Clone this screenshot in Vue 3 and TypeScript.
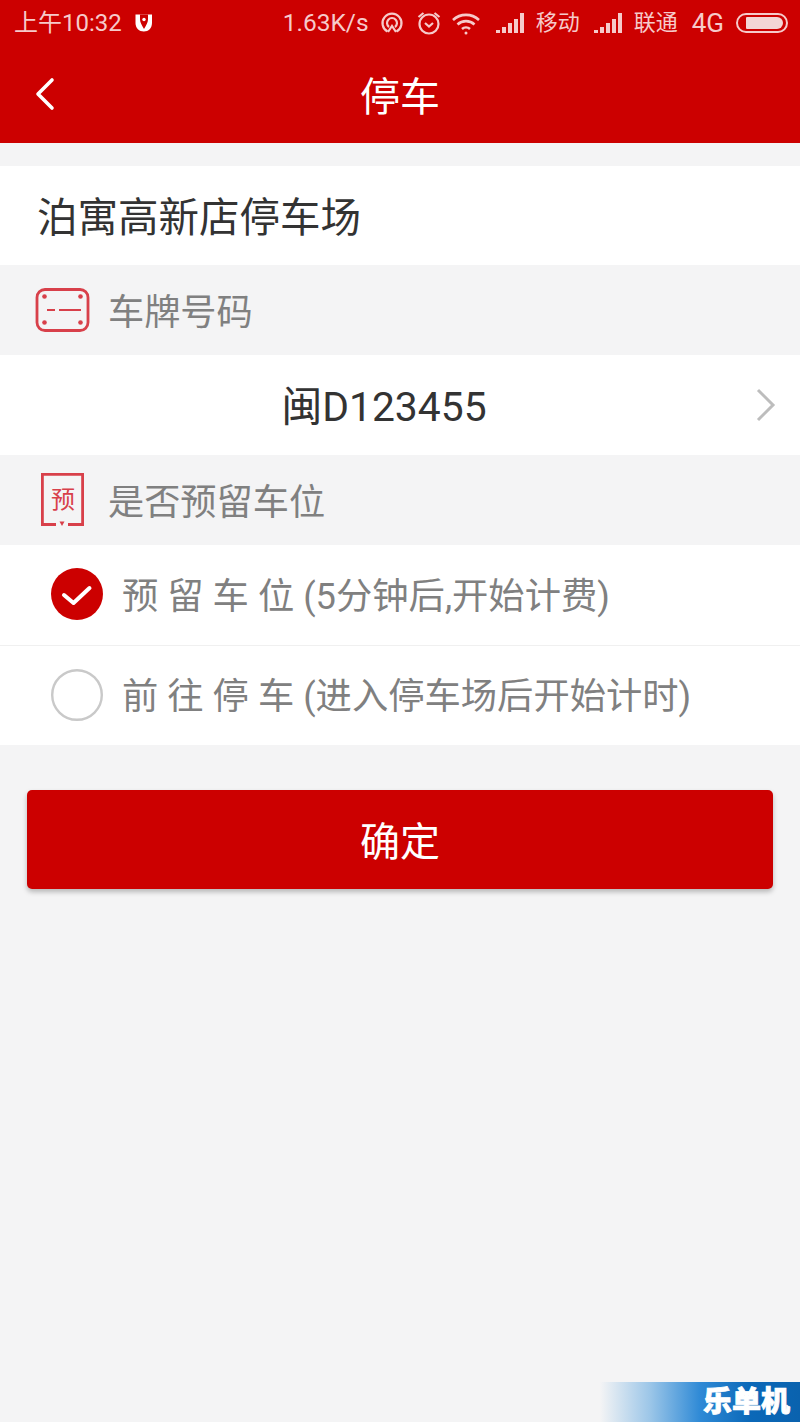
<template>
  <main class="page">
    <header class="top">
      <div class="status">
        <span class="clock">上午10:32</span>
        <svg class="shield" width="20" height="20" viewBox="0 0 20 20">
          <path d="M1.500 1.500H18V10c0 5-3.500 8.500-8.200 8.500S1.500 15 1.500 10z" fill="#fff" />
          <path d="M6 1.500h8v5c0 3-2 6-4 9.500-2-3.500-4-6.500-4-9.500z" fill="#cc0000" />
          <circle cx="10" cy="6.500" r="1.700" fill="#fff" />
        </svg>
        <span class="spacer"></span>
        <span class="speed">1.63K/s</span>
        <svg class="ic-hotspot" width="24" height="24" viewBox="0 0 24 24" fill="none" stroke="#f6caca" stroke-width="2.200">
          <path d="M7.500 20.500a9.500 9.500 0 1 1 9 0" />
          <path d="M9 16a5 5 0 1 1 6 0" />
          <path d="M8 21l4-6 4 6" />
        </svg>
        <svg class="ic-alarm" width="26" height="26" viewBox="0 0 26 26" fill="none" stroke="#f6caca" stroke-width="2.200">
          <circle cx="13" cy="14" r="9.500" />
          <path d="M9 13l4 3.500 4-3.500" />
          <path d="M2.500 7l5-4M23.500 7l-5-4" />
        </svg>
        <svg class="ic-wifi" width="30" height="24" viewBox="0 0 30 24" fill="none" stroke="#f6caca" stroke-width="2.600">
          <path d="M2 9a19 19 0 0 1 26 0" />
          <path d="M6.500 13.500a12.500 12.500 0 0 1 17 0" />
          <path d="M11 18a6 6 0 0 1 8 0" />
          <circle cx="15" cy="22" r="1.500" fill="#f6caca" stroke="none" />
        </svg>
        <div class="signal">
          <i v-for="h in bars" :key="h" :style="{ height: h + 'px' }"></i>
        </div>
        <span class="carrier">移动</span>
        <div class="signal">
          <i v-for="h in bars" :key="h" :style="{ height: h + 'px' }"></i>
        </div>
        <span class="carrier">联通</span>
        <span class="net">4G</span>
        <div class="battery"><div class="level"></div></div>
      </div>
      <div class="nav">
        <svg class="back" width="22" height="34" viewBox="0 0 22 34" fill="none" stroke="#fff" stroke-width="3.600" stroke-linecap="round" stroke-linejoin="round">
          <path d="M18 3L4 17l14 14" />
        </svg>
        <h1 class="nav-title">停车</h1>
      </div>
    </header>

    <section class="lot">泊寓高新店停车场</section>

    <div class="section">
      <svg class="sec-icon" width="56" height="46" viewBox="0 0 56 46" fill="none" stroke="#d8404a">
        <rect x="3" y="2.500" width="51" height="41" rx="8" stroke-width="2.800" />
        <path d="M13 23h8M25 23h22" stroke-width="2.200" />
        <g fill="#d8404a" stroke="none">
          <circle cx="10.500" cy="9.500" r="2.300" />
          <circle cx="46.500" cy="9.500" r="2.300" />
          <circle cx="10.500" cy="35.500" r="2.300" />
          <circle cx="46.500" cy="35.500" r="2.300" />
        </g>
      </svg>
      <span class="sec-label">车牌号码</span>
    </div>

    <div class="plate">
      <span class="plate-no">闽D123455</span>
      <svg class="chevron" width="22" height="34" viewBox="0 0 22 34" fill="none" stroke="#bdbdbd" stroke-width="3">
        <path d="M3 2l15 15L3 32" />
      </svg>
    </div>

    <div class="section">
      <svg class="sec-icon" width="56" height="56" viewBox="0 0 56 56" fill="none" stroke="#d8404a" stroke-width="2.800">
        <path d="M22 52.500H8.400V2.400h40.200v50.100H34" />
        <path d="M25.500 49.500h5L28 54z" fill="#d8404a" stroke="none" />
        <text x="29" y="36" text-anchor="middle" class="yu">预</text>
      </svg>
      <span class="sec-label">是否预留车位</span>
    </div>

    <div class="options">
      <div v-for="opt in options" :key="opt.label" class="option">
        <svg v-if="opt.checked" width="52" height="52" viewBox="0 0 52 52">
          <circle cx="26" cy="26" r="26" fill="#cc0000" />
          <path d="M13 27l9.500 8 16-15" fill="none" stroke="#fff" stroke-width="4" stroke-linecap="round" stroke-linejoin="round" />
        </svg>
        <svg v-else width="52" height="52" viewBox="0 0 52 52">
          <circle cx="26" cy="26" r="24.800" fill="#fff" stroke="#c9c9c9" stroke-width="2.400" />
        </svg>
        <span class="opt-text"><span class="opt-label">{{ opt.label }}</span> {{ opt.note }}</span>
      </div>
    </div>

    <button class="confirm" type="button">确定</button>

    <div class="watermark"><span>乐单机</span></div>
  </main>
</template>

<script setup lang="ts">
interface ParkOption {
  label: string;
  note: string;
  checked: boolean;
}

const bars = [3, 6, 10, 14, 20];

const options: ParkOption[] = [
  { label: "预留车位", note: "(5分钟后,开始计费)", checked: true },
  { label: "前往停车", note: "(进入停车场后开始计时)", checked: false },
];
</script>

<style>
html,
body {
  margin: 0;
  background: #f4f4f5;
}
</style>

<style scoped>
.page {
  position: relative;
  width: 800px;
  height: 1422px;
  overflow: hidden;
  background: #f4f4f5;
  font-family: Roboto, "Noto Sans CJK SC", sans-serif;
}

.top {
  height: 143px;
  background: #cc0000;
  margin-bottom: 23px;
}

.status {
  height: 46px;
  display: flex;
  align-items: center;
  padding: 0 12px 0 14px;
  color: #f6caca;
  font-size: 24.500px;
  line-height: 1;
  box-sizing: border-box;
}

.clock {
  width: 120px;
  font-size: 24px;
}

.spacer {
  flex: 1;
}

.speed {
  margin-right: 11px;
}

.ic-hotspot {
  margin-right: 12px;
}

.ic-alarm {
  margin-right: 9px;
}

.ic-wifi {
  margin-right: 15px;
}

.signal {
  display: flex;
  align-items: flex-end;
  gap: 2px;
  width: 28px;
  height: 20px;
  margin-right: 12px;
}

.signal i {
  display: block;
  width: 4px;
  background: #f6caca;
}

.carrier {
  font-size: 22px;
  margin-right: 14px;
}

.net {
  font-size: 26px;
  margin-right: 12px;
}

.battery {
  width: 52px;
  height: 20px;
  border: 2px solid #f6caca;
  border-radius: 11px;
  box-sizing: border-box;
  padding: 2px 3px 2px 8px;
}

.level {
  height: 100%;
  background: #f3d6d6;
  border-radius: 1px 6px 6px 1px;
}

.nav {
  position: relative;
  height: 97px;
  display: flex;
  align-items: center;
  justify-content: center;
}

.back {
  position: absolute;
  left: 34px;
  top: 31px;
}

.nav-title {
  margin: 0;
  padding-top: 6px;
  font-size: 40px;
  font-weight: 400;
  line-height: 1;
  color: #fff;
}

.lot {
  height: 99px;
  background: #fff;
  display: flex;
  align-items: center;
  padding: 6px 0 0 37px;
  box-sizing: border-box;
  font-size: 40.500px;
  line-height: 1;
  color: #333;
}

.section {
  height: 90px;
  display: flex;
  align-items: center;
  padding-left: 34px;
  font-size: 36.200px;
  line-height: 1;
  color: #808080;
}

.sec-label {
  padding-top: 6px;
}

.sec-icon {
  margin-right: 18px;
  flex: none;
}

.yu {
  font-size: 24px;
  fill: #d8404a;
  stroke: none;
}

.plate {
  position: relative;
  height: 100px;
  background: #fff;
  display: flex;
  align-items: center;
  justify-content: center;
  padding-right: 32px;
  box-sizing: border-box;
  font-size: 40.800px;
  line-height: 1;
  color: #333;
}

.plate-no {
  padding-top: 5px;
}

.chevron {
  position: absolute;
  right: 23px;
  top: 33px;
}

.option {
  height: 100px;
  background: #fff;
  display: flex;
  align-items: center;
  padding: 0 0 2px 51px;
  gap: 19px;
  box-sizing: border-box;
}

.option + .option {
  border-top: 1px solid #f0f0f0;
}

.opt-text {
  padding-top: 6px;
  font-size: 36.300px;
  line-height: 1;
  color: #808080;
}

.opt-label {
  letter-spacing: 9px;
  margin-right: -9px;
}

.confirm {
  display: block;
  width: 746px;
  height: 99px;
  margin: 45px 0 0 27px;
  padding: 6px 0 0;
  border: 0;
  border-radius: 5px;
  background: #cc0000;
  box-shadow: 0 3px 5px rgba(0, 0, 0, 0.25);
  color: #fff;
  font-family: inherit;
  font-size: 40px;
  line-height: 1;
}

.watermark {
  position: absolute;
  right: 0;
  bottom: 0;
  width: 200px;
  height: 40px;
  background: linear-gradient(90deg, #f4f4f5 0%, #9cc6e8 25%, #2f8ad6 50%, #0b68b8 75%, #0a62ae 100%);
  display: flex;
  align-items: center;
  justify-content: flex-end;
  padding-right: 10px;
  box-sizing: border-box;
  color: #fff;
  font-size: 29px;
  font-weight: 900;
  line-height: 1;
  -webkit-text-stroke: 0.8px #fff;
}
</style>
